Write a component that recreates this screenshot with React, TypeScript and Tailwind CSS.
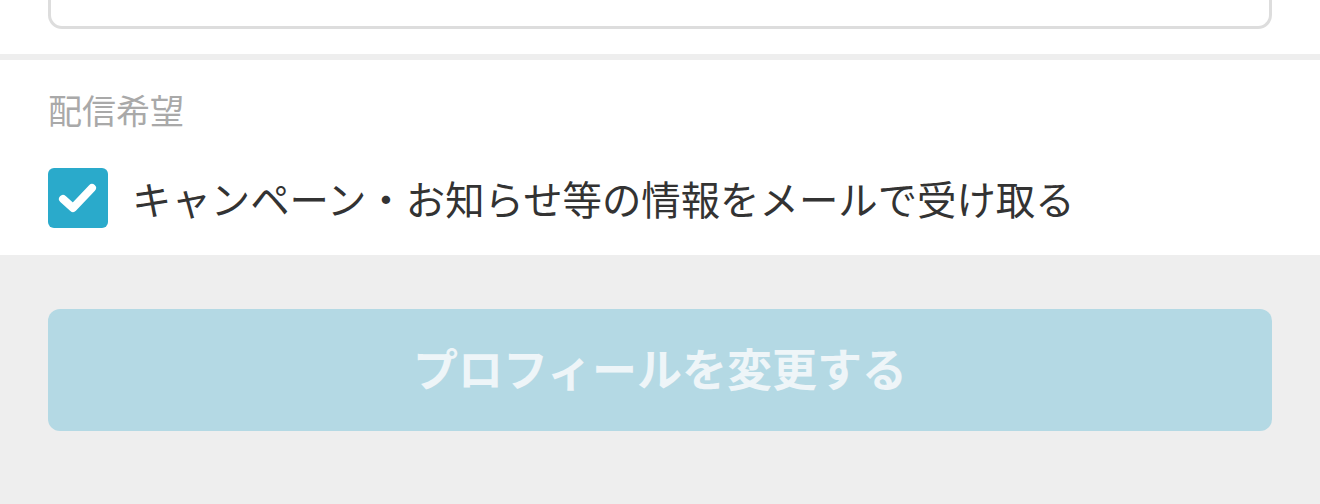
import React from "react";

export default function App() {
  return (
    <div
      className="w-[1320px] h-[504px] bg-[#eeeeee] overflow-hidden"
      style={{ fontFamily: '"Noto Sans CJK JP", "Noto Sans", sans-serif' }}
    >
      <div className="bg-white px-[48px] pb-[25px]">
        <div className="h-[29px] border-[3px] border-t-0 border-[#dddddd] rounded-b-[14px] bg-white" />
      </div>
      <div className="h-[6px]" />
      <div className="bg-white px-[48px] pt-[29px] h-[195px]">
        <div className="text-[34px] leading-[42px] text-[#a9a9a9]">配信希望</div>
        <div className="flex items-center mt-[37px]">
          <div className="w-[60px] h-[60px] rounded-[6px] bg-[#2aaacb] flex items-center justify-center">
            <svg width="42" height="36" viewBox="0 0 42 36">
              <path
                d="M6 19 L16 28 L35 8"
                fill="none"
                stroke="white"
                strokeWidth="8"
                strokeLinecap="round"
                strokeLinejoin="round"
              />
            </svg>
          </div>
          <div className="ml-[24px] text-[39.4px] leading-[50px] text-[#333333] whitespace-nowrap">
            キャンペーン・お知らせ等の情報をメールで受け取る
          </div>
        </div>
      </div>
      <div className="px-[48px] pt-[54px]">
        <button className="w-full h-[122px] rounded-[12px] bg-[#b4d9e4] text-[#eef5f8] text-[45px] font-bold flex items-center justify-center pb-[4px]">
          プロフィールを変更する
        </button>
      </div>
    </div>
  );
}
